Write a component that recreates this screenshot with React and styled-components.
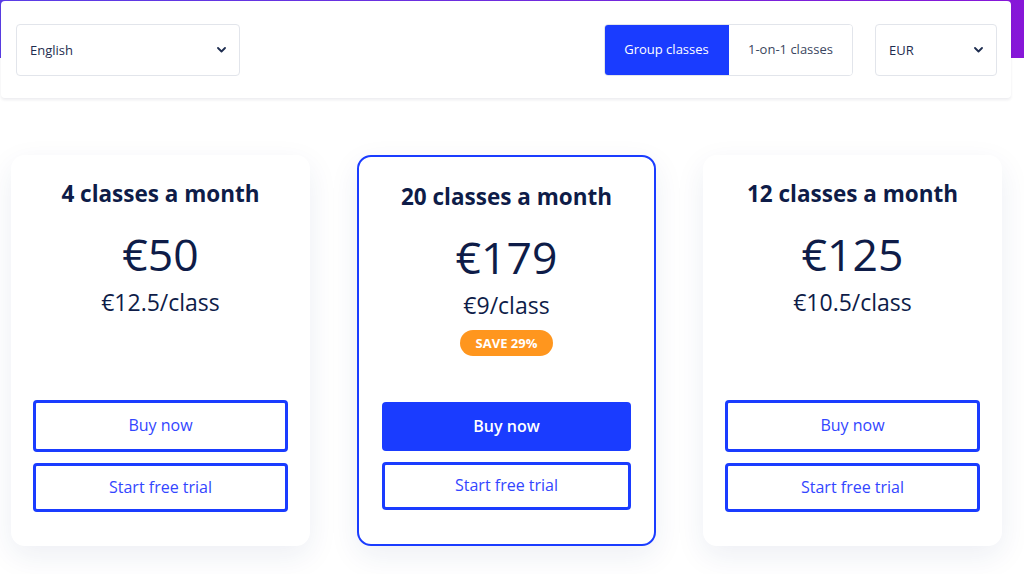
import React from 'react';
import styled, { createGlobalStyle } from 'styled-components';

const BLUE = '#1a3cff';
const NAVY = '#0e1c48';

const GlobalStyle = createGlobalStyle`
  body {
    margin: 0;
    background: #fff;
    font-family: 'Open Sans', 'Liberation Sans', sans-serif;
    color: ${NAVY};
  }
  * {
    box-sizing: border-box;
  }
`;

const Page = styled.div`
  width: 1024px;
  height: 574px;
  overflow: hidden;
`;

const Hero = styled.div`
  padding: 1px 13px 0 1px;
  background: linear-gradient(90deg, #5a3de6 0%, #7328dc 60%, #8716d8 100%) top / 100% 58px no-repeat;
`;

const Toolbar = styled.div`
  height: 97px;
  display: flex;
  align-items: center;
  justify-content: space-between;
  padding: 0 14px 0 15px;
  background: #fff;
  border-radius: 4px;
  box-shadow: 0 2px 3px rgba(20, 30, 70, 0.08);
`;

const Select = styled.div`
  width: ${p => p.$width}px;
  height: 52px;
  display: flex;
  align-items: center;
  justify-content: space-between;
  padding: 1px 13px 0 13px;
  border: 1px solid #e2e5eb;
  border-radius: 4px;
  font-size: 13px;
  color: #1e2d50;
`;

const Right = styled.div`
  display: flex;
  align-items: center;
  gap: 22px;
`;

const Toggle = styled.div`
  display: flex;
  height: 52px;
  border: 1px solid #e2e5eb;
  border-radius: 4px;
  overflow: hidden;
`;

const Segment = styled.div`
  width: ${p => (p.$active ? 125 : 123)}px;
  margin: ${p => (p.$active ? '-1px 0 -1px -1px' : '0')};
  display: flex;
  align-items: center;
  justify-content: center;
  padding-bottom: 2px;
  font-size: 13px;
  background: ${p => (p.$active ? BLUE : '#fff')};
  color: ${p => (p.$active ? '#fff' : '#3a4560')};
`;

const Cards = styled.div`
  display: flex;
  gap: 47px;
  padding: 57px 0 0 11px;
`;

const Card = styled.div`
  width: 299px;
  height: 391px;
  display: flex;
  flex-direction: column;
  align-items: center;
  padding: ${p => (p.$featured ? '25px 23px 34px' : '24px 22px 34px')};
  background: #fff;
  border: ${p => (p.$featured ? `2px solid ${BLUE}` : 'none')};
  border-radius: 14px;
  box-shadow: 0 10px 30px rgba(30, 45, 110, 0.08);
`;

const Title = styled.h2`
  margin: 0;
  font-size: 22.5px;
  line-height: 30px;
  font-weight: 700;
`;

const Price = styled.div`
  margin-top: 15px;
  font-size: 44.5px;
  line-height: 60px;
`;

const PerClass = styled.div`
  margin-top: 3px;
  font-size: 23px;
  line-height: 30px;
  font-weight: 500;
`;

const Badge = styled.span`
  margin-top: 10px;
  height: 26px;
  padding: 0 16px;
  display: inline-flex;
  align-items: center;
  border-radius: 13px;
  background: #ff961e;
  color: #fff;
  font-size: 13px;
  font-weight: 700;
`;

const Actions = styled.div`
  margin-top: auto;
  width: 100%;
  display: flex;
  flex-direction: column;
  gap: 11px;
`;

const Button = styled.button`
  width: 100%;
  height: ${p => p.$height}px;
  padding: 0 0 2px;
  border: ${p => (p.$filled ? 'none' : `3px solid ${BLUE}`)};
  border-radius: 4px;
  background: ${p => (p.$filled ? BLUE : '#fff')};
  color: ${p => (p.$filled ? '#fff' : '#3346ff')};
  font-family: inherit;
  font-size: 16px;
  font-weight: ${p => (p.$filled ? 600 : 500)};
  cursor: pointer;
`;

const Chevron = () => (
  <svg width="9" height="6" viewBox="0 0 9 6">
    <polyline points="1,1 4.5,4.5 8,1" fill="none" stroke="#1e2d50" strokeWidth="1.8" strokeLinecap="round" strokeLinejoin="round" />
  </svg>
);

const plans = [
  { title: '4 classes a month', price: '€50', per: '€12.5/class' },
  { title: '20 classes a month', price: '€179', per: '€9/class', save: 'SAVE 29%', featured: true },
  { title: '12 classes a month', price: '€125', per: '€10.5/class' }
];

const App = () => (
  <Page>
    <GlobalStyle />
    <Hero>
      <Toolbar>
        <Select $width={224}>
          English
          <Chevron />
        </Select>
        <Right>
          <Toggle>
            <Segment $active>Group classes</Segment>
            <Segment>1-on-1 classes</Segment>
          </Toggle>
          <Select $width={122}>
            EUR
            <Chevron />
          </Select>
        </Right>
      </Toolbar>
    </Hero>
    <Cards>
      {plans.map(plan => (
        <Card key={plan.title} $featured={plan.featured}>
          <Title>{plan.title}</Title>
          <Price>{plan.price}</Price>
          <PerClass>{plan.per}</PerClass>
          {plan.save && <Badge>{plan.save}</Badge>}
          <Actions>
            <Button $filled={plan.featured} $height={plan.featured ? 49 : 52}>
              Buy now
            </Button>
            <Button $height={plan.featured ? 48 : 49}>Start free trial</Button>
          </Actions>
        </Card>
      ))}
    </Cards>
  </Page>
);

export default App;
